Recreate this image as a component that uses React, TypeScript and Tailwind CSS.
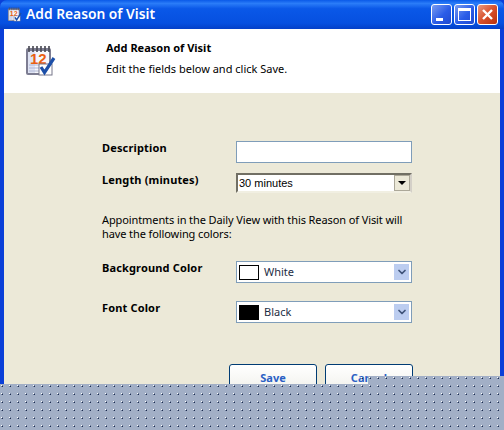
import { ChevronDown } from "lucide-react";

function CalendarIcon({ size }: { size: number }) {
  return (
    <svg width={size} height={size} viewBox="0 0 32 32" className="shrink-0">
      <rect x="2" y="3" width="25" height="27" rx="2" fill="#7d7d92" />
      <rect x="4" y="6" width="21" height="22" fill="#f6f7fb" />
      <path d="M4 6h7v22H4z" fill="#dfe3f3" />
      <path d="M5 20h18M5 23h12M5 26h10" stroke="#aeb7d6" strokeWidth="1" />
      {[5, 9, 13, 17, 21, 25].map((x) => (
        <path key={x} d={`M${x} 1v6`} stroke="#4e4e58" strokeWidth="1.7" />
      ))}
      <text x="6" y="19" fontFamily="'Liberation Sans',sans-serif" fontWeight="700" fontSize="15" fill="#ea5f12">
        12
      </text>
      <rect x="15" y="19" width="13" height="11" fill="#fff" stroke="#77778a" strokeWidth="1" />
      <path d="M17 22l3.5 5.5L30 13" fill="none" stroke="#1c4fa8" strokeWidth="3.2" />
    </svg>
  );
}

function CaptionButton({ kind }: { kind: "min" | "max" | "close" }) {
  const bg =
    kind === "close"
      ? "bg-[linear-gradient(135deg,#e89a80,#d8502c_50%,#b8300c)]"
      : "bg-[linear-gradient(135deg,#7a9cf0,#2a5ce8_55%,#1f49d0)]";
  return (
    <div className={`w-[21px] h-[21px] rounded-[3px] border border-white flex items-center justify-center relative ${bg}`}>
      {kind === "min" && <div className="absolute left-[4px] bottom-[3px] w-[7px] h-[3px] bg-white" />}
      {kind === "max" && <div className="w-[13px] h-[13px] border border-white border-t-[3px]" />}
      {kind === "close" && (
        <svg width="13" height="13" viewBox="0 0 13 13">
          <path d="M2 2l9 9M11 2l-9 9" stroke="#fff" strokeWidth="2.4" />
        </svg>
      )}
    </div>
  );
}

function ColorSelect({ swatch, label }: { swatch: string; label: string }) {
  return (
    <div className="w-[176px] h-[22px] border border-[#7f9db9] bg-white flex items-center pl-[2px] pr-[2px]">
      <div className={`w-[20px] h-[15px] border border-black ${swatch}`} />
      <span className="ml-[5px] flex-1 text-[11px] text-[#1c2c44]">{label}</span>
      <div className="w-[15px] h-[16px] bg-[#bccdf0] flex items-center justify-center">
        <ChevronDown size={12} strokeWidth={3.5} className="text-[#3f5378]" />
      </div>
    </div>
  );
}

function XpButton({ label }: { label: string }) {
  return (
    <div className="w-[88px] h-[30px] rounded-[3px] border border-[#003c74] bg-[linear-gradient(#ffffff,#f0f0ea)] pt-[5px] text-center font-bold text-[11px] leading-[15px] text-[#2a5fc4]">
      {label}
    </div>
  );
}

function Label({ text }: { text: string }) {
  return <div className="w-[134px] text-[11px] font-bold tracking-[0.15px] text-black leading-[13px]">{text}</div>;
}

function DotPattern({ id, base }: { id: string; base: boolean }) {
  return (
    <svg width="100%" height="100%" className="block">
      <defs>
        <pattern id={id} width="8" height="8" patternUnits="userSpaceOnUse">
          {base && <rect width="8" height="8" fill="#a2afc6" />}
          <rect x="1" y="1" width="1" height="1" fill="#ffffff" />
          <rect x="2" y="1" width="1" height="1" fill="#74839f" />
          <rect x="1" y="2" width="1" height="1" fill="#74839f" />
          <rect x="2" y="2" width="1" height="1" fill="#1c2c50" />
        </pattern>
      </defs>
      <rect width="100%" height="100%" fill={`url(#${id})`} />
    </svg>
  );
}

export default function App() {
  return (
    <div className="relative w-[504px] h-[430px] overflow-hidden bg-[#0a3fd8] font-['Noto_Sans',sans-serif]">
      {/* title bar */}
      <div className="h-[29px] flex items-center pl-[7px] pr-[6px] rounded-t-[7px] bg-[linear-gradient(#0a5ae8,#2a7cf8_12%,#0a58e8_30%,#0650e0_80%,#0440c8)]">
        <CalendarIcon size={15} />
        <span className="ml-[4px] text-[13.8px] font-semibold text-white">Add Reason of Visit</span>
        <div className="ml-auto flex gap-[2px]">
          <CaptionButton kind="min" />
          <CaptionButton kind="max" />
          <CaptionButton kind="close" />
        </div>
      </div>

      <div className="mx-[4px] h-[401px] bg-[#ece9d8]">
        {/* header band */}
        <div className="h-[64px] bg-white flex">
          <div className="w-[102px] pl-[20px] pt-[16px]">
            <CalendarIcon size={32} />
          </div>
          <div className="pt-[11px]">
            <div className="text-[11px] font-bold text-black leading-[15px]">Add Reason of Visit</div>
            <div className="mt-[6px] text-[11px] text-black leading-[15px]">Edit the fields below and click Save.</div>
          </div>
        </div>

        {/* form */}
        <div className="pl-[98px] pt-[48px]">
          <div className="flex h-[22px]">
            <Label text="Description" />
            <div className="w-[176px] h-[22px] border border-[#7f9db9] bg-white" />
          </div>
          <div className="flex mt-[10px] h-[20px]">
            <Label text="Length (minutes)" />
            <div className="w-[176px] h-[20px] border-2 border-t-[#716f64] border-l-[#716f64] border-r-[#d4d0c8] border-b-[#f1efe2] bg-white flex items-center">
              <span className="ml-[1px] pt-[1px] flex-1 font-['Liberation_Sans',sans-serif] text-[11px] text-black">30 minutes</span>
              <div className="w-[16px] h-[16px] bg-[#ece9d8] border border-[#aca899] flex items-center justify-center">
                <div className="w-0 h-0 border-x-[4px] border-x-transparent border-t-[4px] border-t-black" />
              </div>
            </div>
          </div>
          <div className="mt-[20px] whitespace-nowrap text-[11px] tracking-[-0.1px] text-black leading-[14px]">
            Appointments in the Daily View with this Reason of Visit will
            <br />
            have the following colors:
          </div>
          <div className="flex mt-[20px]">
            <Label text="Background Color" />
            <ColorSelect swatch="bg-white" label="White" />
          </div>
          <div className="flex mt-[18px]">
            <Label text="Font Color" />
            <ColorSelect swatch="bg-black" label="Black" />
          </div>
          <div className="flex gap-[8px] mt-[41px] ml-[127px]">
            <XpButton label="Save" />
            <XpButton label="Cancel" />
          </div>
        </div>
      </div>

      {/* dotted cover over the lower edge */}
      <div className="absolute left-0 right-0 top-[384px] bottom-0">
        <DotPattern id="dots-main" base />
      </div>
      <div className="absolute left-[368px] right-0 top-[376px] h-[8px]">
        <DotPattern id="dots-notch" base />
      </div>
      <div className="absolute left-[360px] w-[8px] top-[376px] h-[8px]">
        <DotPattern id="dots-patch" base={false} />
      </div>
    </div>
  );
}
